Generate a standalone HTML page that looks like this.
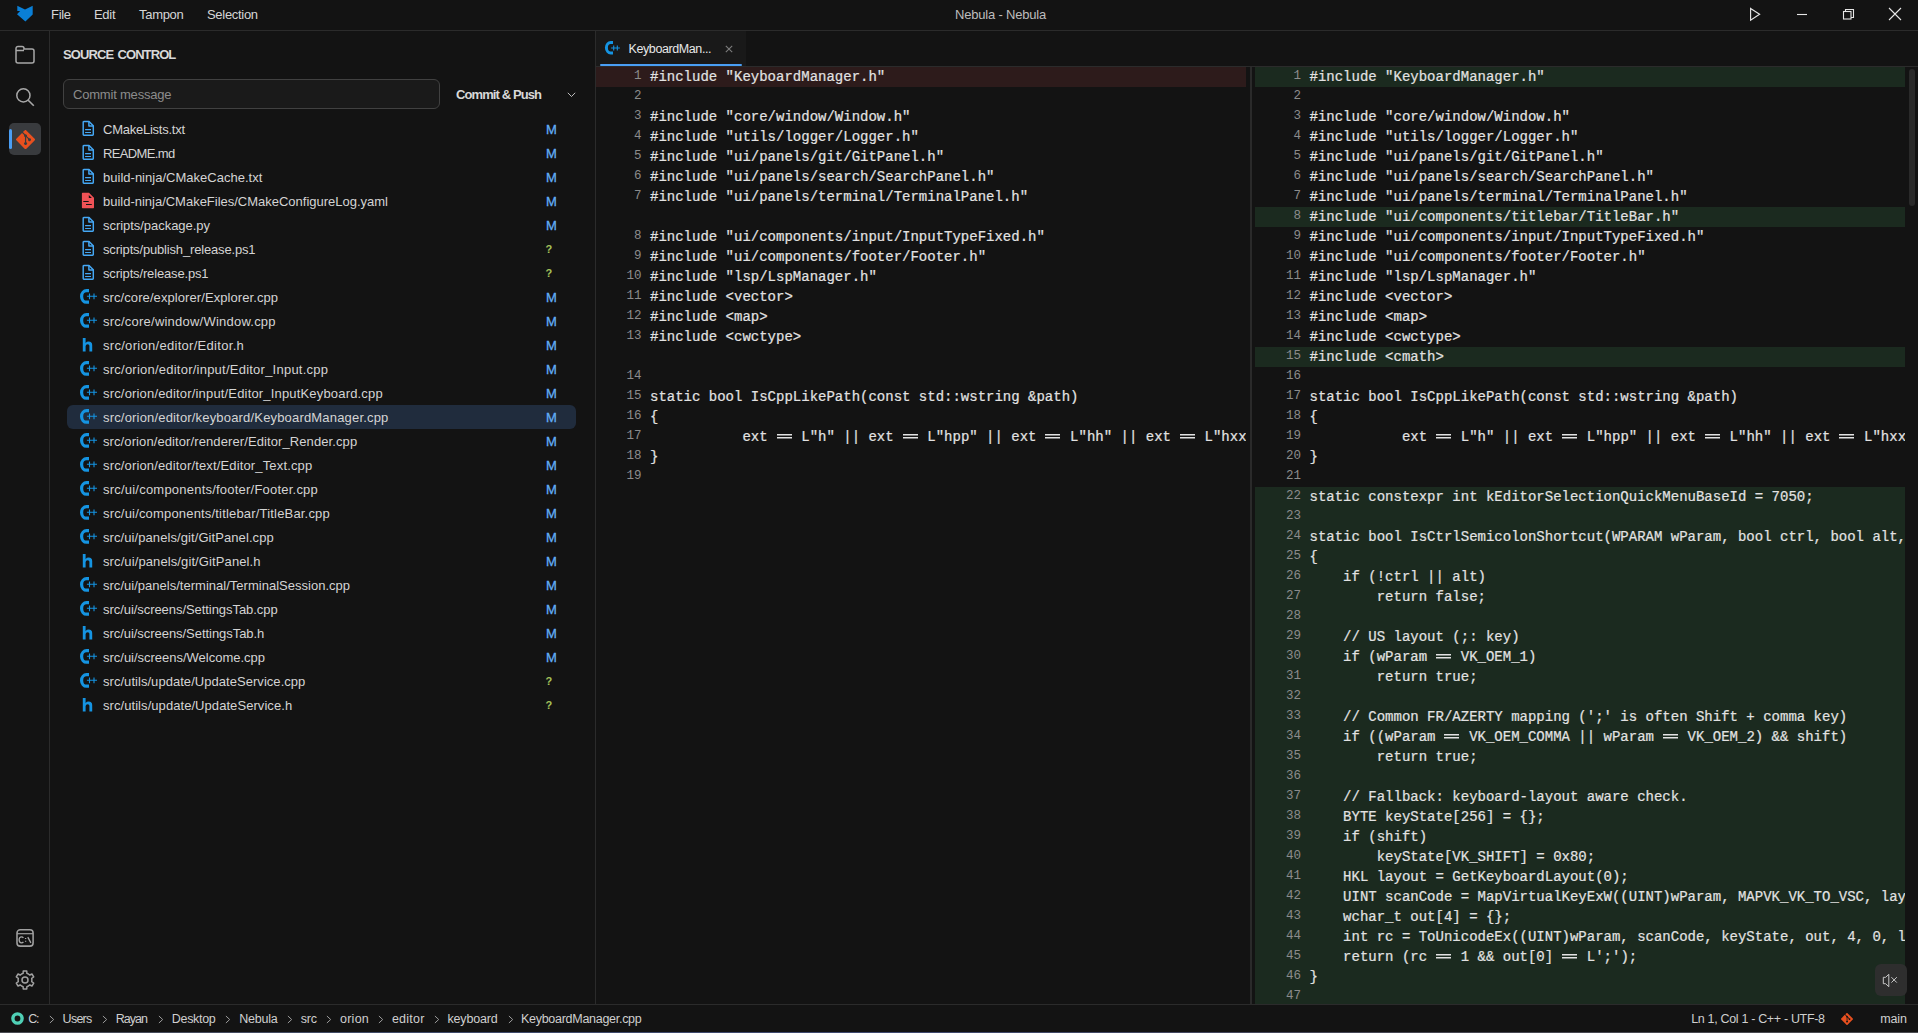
<!DOCTYPE html>
<html><head><meta charset="utf-8"><title>Nebula</title>
<style>
*{margin:0;padding:0;box-sizing:border-box}
html,body{width:1918px;height:1033px;overflow:hidden;background:#131313;font-family:"Liberation Sans",sans-serif;color:#d4d4d4}
.abs{position:absolute}
#titlebar{position:absolute;left:0;top:0;width:1918px;height:31px;background:#131313;border-bottom:1px solid #2b2b2b}
.menu{position:absolute;top:7px;font-size:13px;color:#d6d6d6;letter-spacing:-0.3px}
#title{position:absolute;top:7px;left:955px;font-size:13px;color:#bdbdbd;letter-spacing:-0.2px}
#activity{position:absolute;left:0;top:31px;width:50px;height:973px;border-right:1px solid #2b2b2b}
#sidebar{position:absolute;left:50px;top:31px;width:546px;height:973px;border-right:1px solid #2b2b2b}
#sc-title{position:absolute;left:13px;top:16px;font-size:13px;font-weight:bold;color:#d8d8d8;letter-spacing:-0.9px;word-spacing:1.5px}
#commit{position:absolute;left:13px;top:48px;width:377px;height:30px;border:1px solid #414141;border-radius:6px;background:#1a1a1a}
#commit span{position:absolute;left:9px;top:7px;font-size:13px;color:#8c8c8c;letter-spacing:-0.2px}
#cpush{position:absolute;left:406px;top:56px;font-size:13px;font-weight:bold;color:#d8d8d8;letter-spacing:-0.9px}
.row{position:absolute;left:17px;width:509px;height:24px}
.row.sel{background:#202c3d;border-radius:6px}
.icw{position:absolute;left:9px;top:0;width:24px;height:24px}
.ic{position:absolute;left:0;top:0}
.fn{position:absolute;left:36px;top:5px;font-size:13px;color:#d4d4d4;white-space:nowrap;letter-spacing:-0.05px}
.st{position:absolute;left:479px;top:4.5px;font-size:13px;color:#62aef5;-webkit-text-stroke:0.3px #62aef5}
.st.q{left:478.6px;top:6.3px;color:#a6c25a;font-size:11px;font-weight:bold;-webkit-text-stroke:0}
#tabs{position:absolute;left:596px;top:31px;width:1322px;height:36px;border-bottom:1px solid #2b2b2b}
#tab{position:absolute;left:0;top:0;width:150px;height:35px;background:#191919}
#tab .ul{position:absolute;left:4px;top:33px;width:142px;height:2px;background:#4a9ef5;border-radius:1px}
#tab .nm{position:absolute;left:32.5px;top:10.5px;font-size:12.5px;color:#e8e8e8;letter-spacing:-0.4px}
#tab .x{position:absolute;left:128px;top:9px;font-size:14px;color:#8a8a8a}
.pane{position:absolute;top:67px;height:937px;overflow:hidden;font-family:"Liberation Mono",monospace;font-size:14px}
.ln{position:absolute;left:0;width:100%;height:20px}
.ln.red{background:#2d1b1b}
.ln.grn{background:#1b2a1f}
.num{position:absolute;left:0;width:45.5px;text-align:right;top:1.5px;color:#8c8c8c;font-size:12.5px}
.tx{position:absolute;left:54px;top:2px;white-space:pre;color:#e2e2e2;-webkit-text-stroke:0.2px #e2e2e2}
.eq{color:transparent;-webkit-text-stroke:0;background:linear-gradient(#e2e2e2,#e2e2e2) 0.5px 5px/15.3px 1.5px no-repeat,linear-gradient(#e2e2e2,#e2e2e2) 0.5px 8.4px/15.3px 1.5px no-repeat}
#lpane{left:596px;width:650px}
#rpane{left:1255px;width:650px}
#rpane .num{width:46px}
#rpane .tx{left:54.5px}
#divider{position:absolute;left:1250px;top:67px;width:2px;height:937px;background:#2a2a2a}
#vscroll{position:absolute;left:1909px;top:69px;width:6px;height:137px;background:#2a2a2a;border-radius:3px}
#mute{position:absolute;left:1875px;top:964px;width:32px;height:32px;border-radius:6px;background:#2e2e2e}
#status{position:absolute;left:0;top:1004px;width:1918px;height:28px;border-top:1px solid #2b2b2b;background:#131313}
#status .cr{position:absolute;top:6.5px;font-size:12.5px;color:#cfcfcf;white-space:nowrap}
.sep{display:inline-block;color:#9a9a9a;margin:0 0}
#bottomline{position:absolute;left:0;top:1032px;width:1918px;height:1px;background:linear-gradient(90deg,#4a4c52 0%,#3e4a6a 22%,#3e4870 47%,#464652 73%,#4a4b50 100%)}
</style></head>
<body>
<div id="titlebar">
  <svg class="abs" style="left:0;top:0" width="40" height="30" viewBox="0 0 40 30"><path d="M17.3 5.8L25 9.6L32.7 5.8L32.7 14.6L25.4 21.6L17 14.3L20.1 11L17.3 10.9Z" fill="#0a7fd6"/></svg>
  <span class="menu" style="left:51px">File</span>
  <span class="menu" style="left:94px">Edit</span>
  <span class="menu" style="left:139px">Tampon</span>
  <span class="menu" style="left:207px">Selection</span>
  <span id="title">Nebula - Nebula</span>
  <svg class="abs" style="left:1748px;top:6px" width="16" height="17" viewBox="0 0 16 17"><path d="M2.6 2.4L11.6 8.3L2.6 14.2Z" fill="none" stroke="#e6e6e6" stroke-width="1.15" stroke-linejoin="miter"/></svg>
  <svg class="abs" style="left:1796px;top:13px" width="12" height="3" viewBox="0 0 12 3"><path d="M1 1.5h10" stroke="#e6e6e6" stroke-width="1.1"/></svg>
  <svg class="abs" style="left:1842px;top:8px" width="13" height="12" viewBox="0 0 13 12"><rect x="1.5" y="3.5" width="7.5" height="7.5" fill="none" stroke="#e6e6e6" stroke-width="1.1"/><path d="M3.5 3.5V1.5h8v8h-2.5" fill="none" stroke="#e6e6e6" stroke-width="1.1"/></svg>
  <svg class="abs" style="left:1888px;top:7px" width="14" height="14" viewBox="0 0 14 14"><path d="M1 1L13 13M13 1L1 13" stroke="#e6e6e6" stroke-width="1.1"/></svg>
</div>

<div id="activity">
  <svg class="abs" style="left:14px;top:14px" width="22" height="20" viewBox="0 0 22 20"><path d="M2 3.5a2 2 0 0 1 2-2h4a2 2 0 0 1 2 2v0.5h8a2 2 0 0 1 2 2v10a2 2 0 0 1-2 2H4a2 2 0 0 1-2-2z M2 5.5h8" fill="none" stroke="#a8a8a8" stroke-width="1.5"/></svg>
  <svg class="abs" style="left:15px;top:56px" width="21" height="21" viewBox="0 0 21 21"><circle cx="8.4" cy="8.4" r="6.6" fill="none" stroke="#a8a8a8" stroke-width="1.5"/><path d="M13.2 13.2L18.8 18.8" stroke="#a8a8a8" stroke-width="1.6"/></svg>
  <div class="abs" style="left:9px;top:92px;width:32px;height:32px;background:#393b3e;border-radius:5px"></div>
  <div class="abs" style="left:9px;top:98px;width:3px;height:20px;background:#4a9ef5;border-radius:1.5px"></div>
  <svg class="abs" style="left:15.5px;top:98.5px" width="19" height="19" viewBox="0 0 92 92"><path d="M90.156 41.965 50.036 1.848a5.918 5.918 0 0 0-8.372 0l-8.328 8.332 10.566 10.566a7.03 7.03 0 0 1 7.23 1.684 7.034 7.034 0 0 1 1.669 7.277l10.187 10.184a7.028 7.028 0 0 1 7.278 1.672 7.04 7.04 0 0 1 0 9.957 7.05 7.05 0 0 1-9.965 0 7.044 7.044 0 0 1-1.528-7.66l-9.5-9.497V59.36a7.04 7.04 0 0 1 1.86 11.29 7.04 7.04 0 0 1-9.957 0 7.04 7.04 0 0 1 0-9.958 7.06 7.06 0 0 1 2.304-1.539V33.926a7.049 7.049 0 0 1-3.82-9.234L29.242 14.272 1.73 41.777a5.925 5.925 0 0 0 0 8.371L41.852 90.27a5.925 5.925 0 0 0 8.37 0l39.934-39.934a5.925 5.925 0 0 0 0-8.371" fill="#e8501f"/></svg>
  <svg class="abs" style="left:15px;top:897px" width="20" height="20" viewBox="0 0 20 20"><rect x="2" y="1.8" width="16.1" height="16.3" rx="3.2" fill="none" stroke="#a0a0a0" stroke-width="1.55"/><path d="M2 5.7H18" stroke="#a0a0a0" stroke-width="1.2"/><path d="M8.4 9.8C7.9 9.1 7.2 8.8 6.5 8.8C5 8.8 4.1 10.1 4.1 11.8C4.1 13.5 5 14.8 6.5 14.8C7.2 14.8 7.9 14.5 8.4 13.8" fill="none" stroke="#a8a8a8" stroke-width="1.3"/><path d="M10.6 10V11M10.6 12.8V13.8" stroke="#a8a8a8" stroke-width="1.3"/><path d="M12.8 9.1L15.9 14.9" stroke="#a8a8a8" stroke-width="1.3"/></svg>
  <svg class="abs" style="left:13px;top:937px" width="24" height="24" viewBox="0 0 24 24"><path fill="none" stroke="#a0a0a0" stroke-width="1.5" stroke-linejoin="round" d="M8.55 6.02 L10.10 5.37 L10.24 2.97 L13.76 2.97 L13.90 5.37 L15.45 6.02 L16.79 7.04 L18.94 5.96 L20.70 9.00 L18.70 10.33 L18.90 12.00 L18.70 13.67 L20.70 15.00 L18.94 18.04 L16.79 16.96 L15.45 17.98 L13.90 18.63 L13.76 21.03 L10.24 21.03 L10.10 18.63 L8.55 17.98 L7.21 16.96 L5.06 18.04 L3.30 15.00 L5.30 13.67 L5.10 12.00 L5.30 10.33 L3.30 9.00 L5.06 5.96 L7.21 7.04Z"/><circle cx="12" cy="12" r="3" fill="none" stroke="#a0a0a0" stroke-width="1.5"/></svg>
</div>

<div id="sidebar">
  <div id="sc-title">SOURCE CONTROL</div>
  <div id="commit"><span>Commit message</span></div>
  <div id="cpush">Commit &amp; Push</div>
  <svg class="abs" style="left:517px;top:61px" width="9" height="5" viewBox="0 0 9 5"><path d="M0.8 0.8l3.7 3.7 3.7-3.7" fill="none" stroke="#cfcfcf" stroke-width="0.9"/></svg>
<div class="row" style="top:86px"><span class="icw"><svg class="ic" width="24" height="24" viewBox="0 0 24 24"><path d="M7.2 5.2a0.6 0.6 0 0 1 0.6-0.7H13L17.3 8.8V17.6a0.7 0.7 0 0 1-0.7 0.7H7.9a0.7 0.7 0 0 1-0.7-0.7Z" fill="none" stroke="#45a8f5" stroke-width="1.45" stroke-linejoin="round"/><path d="M12.9 4.6V8.9H17.2" fill="none" stroke="#45a8f5" stroke-width="1.45" stroke-linejoin="round"/><path d="M9.1 12.6H15M9.1 15.5H15" stroke="#45a8f5" stroke-width="1.2"/></svg></span><span class="fn" style="letter-spacing:-0.242px">CMakeLists.txt</span><span class="st">M</span></div>
<div class="row" style="top:110px"><span class="icw"><svg class="ic" width="24" height="24" viewBox="0 0 24 24"><path d="M7.2 5.2a0.6 0.6 0 0 1 0.6-0.7H13L17.3 8.8V17.6a0.7 0.7 0 0 1-0.7 0.7H7.9a0.7 0.7 0 0 1-0.7-0.7Z" fill="none" stroke="#45a8f5" stroke-width="1.45" stroke-linejoin="round"/><path d="M12.9 4.6V8.9H17.2" fill="none" stroke="#45a8f5" stroke-width="1.45" stroke-linejoin="round"/><path d="M9.1 12.6H15M9.1 15.5H15" stroke="#45a8f5" stroke-width="1.2"/></svg></span><span class="fn" style="letter-spacing:-0.637px">README.md</span><span class="st">M</span></div>
<div class="row" style="top:134px"><span class="icw"><svg class="ic" width="24" height="24" viewBox="0 0 24 24"><path d="M7.2 5.2a0.6 0.6 0 0 1 0.6-0.7H13L17.3 8.8V17.6a0.7 0.7 0 0 1-0.7 0.7H7.9a0.7 0.7 0 0 1-0.7-0.7Z" fill="none" stroke="#45a8f5" stroke-width="1.45" stroke-linejoin="round"/><path d="M12.9 4.6V8.9H17.2" fill="none" stroke="#45a8f5" stroke-width="1.45" stroke-linejoin="round"/><path d="M9.1 12.6H15M9.1 15.5H15" stroke="#45a8f5" stroke-width="1.2"/></svg></span><span class="fn" style="letter-spacing:0.014px">build-ninja/CMakeCache.txt</span><span class="st">M</span></div>
<div class="row" style="top:158px"><span class="icw"><svg class="ic" width="24" height="24" viewBox="0 0 24 24"><path d="M5.9 4.4a0.6 0.6 0 0 1 0.6-0.6H13L18 8.8V18.5a0.7 0.7 0 0 1-0.7 0.7H6.6a0.7 0.7 0 0 1-0.7-0.7Z" fill="#f05256"/><path d="M12.8 6V9.1H15.9Z" fill="#131313"/><path d="M7.3 12.5H12.7M10 15.5H15.8" stroke="#131313" stroke-width="1.1"/></svg></span><span class="fn" style="letter-spacing:-0.011px">build-ninja/CMakeFiles/CMakeConfigureLog.yaml</span><span class="st">M</span></div>
<div class="row" style="top:182px"><span class="icw"><svg class="ic" width="24" height="24" viewBox="0 0 24 24"><path d="M7.2 5.2a0.6 0.6 0 0 1 0.6-0.7H13L17.3 8.8V17.6a0.7 0.7 0 0 1-0.7 0.7H7.9a0.7 0.7 0 0 1-0.7-0.7Z" fill="none" stroke="#45a8f5" stroke-width="1.45" stroke-linejoin="round"/><path d="M12.9 4.6V8.9H17.2" fill="none" stroke="#45a8f5" stroke-width="1.45" stroke-linejoin="round"/><path d="M9.1 12.6H15M9.1 15.5H15" stroke="#45a8f5" stroke-width="1.2"/></svg></span><span class="fn" style="letter-spacing:-0.038px">scripts/package.py</span><span class="st">M</span></div>
<div class="row" style="top:206px"><span class="icw"><svg class="ic" width="24" height="24" viewBox="0 0 24 24"><path d="M7.2 5.2a0.6 0.6 0 0 1 0.6-0.7H13L17.3 8.8V17.6a0.7 0.7 0 0 1-0.7 0.7H7.9a0.7 0.7 0 0 1-0.7-0.7Z" fill="none" stroke="#45a8f5" stroke-width="1.45" stroke-linejoin="round"/><path d="M12.9 4.6V8.9H17.2" fill="none" stroke="#45a8f5" stroke-width="1.45" stroke-linejoin="round"/><path d="M9.1 12.6H15M9.1 15.5H15" stroke="#45a8f5" stroke-width="1.2"/></svg></span><span class="fn" style="letter-spacing:-0.162px">scripts/publish_release.ps1</span><span class="st q">?</span></div>
<div class="row" style="top:230px"><span class="icw"><svg class="ic" width="24" height="24" viewBox="0 0 24 24"><path d="M7.2 5.2a0.6 0.6 0 0 1 0.6-0.7H13L17.3 8.8V17.6a0.7 0.7 0 0 1-0.7 0.7H7.9a0.7 0.7 0 0 1-0.7-0.7Z" fill="none" stroke="#45a8f5" stroke-width="1.45" stroke-linejoin="round"/><path d="M12.9 4.6V8.9H17.2" fill="none" stroke="#45a8f5" stroke-width="1.45" stroke-linejoin="round"/><path d="M9.1 12.6H15M9.1 15.5H15" stroke="#45a8f5" stroke-width="1.2"/></svg></span><span class="fn" style="letter-spacing:-0.156px">scripts/release.ps1</span><span class="st q">?</span></div>
<div class="row" style="top:254px"><span class="icw"><svg class="ic" width="24" height="24" viewBox="0 0 24 24"><path d="M13 4H10.5A6.5 7.4 0 0 0 10.5 18.8H13V15.6H10.5A3.3 4.2 0 0 1 10.5 7.2H13Z" fill="#1594e2"/><path d="M10.9 11.3H21M13.5 8.5V14.2M18 8.5V14.2" stroke="#1594e2" stroke-width="1.1"/></svg></span><span class="fn" style="letter-spacing:0.081px">src/core/explorer/Explorer.cpp</span><span class="st">M</span></div>
<div class="row" style="top:278px"><span class="icw"><svg class="ic" width="24" height="24" viewBox="0 0 24 24"><path d="M13 4H10.5A6.5 7.4 0 0 0 10.5 18.8H13V15.6H10.5A3.3 4.2 0 0 1 10.5 7.2H13Z" fill="#1594e2"/><path d="M10.9 11.3H21M13.5 8.5V14.2M18 8.5V14.2" stroke="#1594e2" stroke-width="1.1"/></svg></span><span class="fn" style="letter-spacing:0.226px">src/core/window/Window.cpp</span><span class="st">M</span></div>
<div class="row" style="top:302px"><span class="icw"><svg class="ic" width="24" height="24" viewBox="0 0 24 24"><path d="M6.8 4.9H9.6V9.9Q10.8 8.6 12.6 8.6Q16.2 8.6 16.2 12.2V18.4H13.4V12.8Q13.4 11.2 11.8 11.2Q9.6 11.2 9.6 13.2V18.4H6.8Z" fill="#1594e2"/></svg></span><span class="fn" style="letter-spacing:0.296px">src/orion/editor/Editor.h</span><span class="st">M</span></div>
<div class="row" style="top:326px"><span class="icw"><svg class="ic" width="24" height="24" viewBox="0 0 24 24"><path d="M13 4H10.5A6.5 7.4 0 0 0 10.5 18.8H13V15.6H10.5A3.3 4.2 0 0 1 10.5 7.2H13Z" fill="#1594e2"/><path d="M10.9 11.3H21M13.5 8.5V14.2M18 8.5V14.2" stroke="#1594e2" stroke-width="1.1"/></svg></span><span class="fn" style="letter-spacing:0.234px">src/orion/editor/input/Editor_Input.cpp</span><span class="st">M</span></div>
<div class="row" style="top:350px"><span class="icw"><svg class="ic" width="24" height="24" viewBox="0 0 24 24"><path d="M13 4H10.5A6.5 7.4 0 0 0 10.5 18.8H13V15.6H10.5A3.3 4.2 0 0 1 10.5 7.2H13Z" fill="#1594e2"/><path d="M10.9 11.3H21M13.5 8.5V14.2M18 8.5V14.2" stroke="#1594e2" stroke-width="1.1"/></svg></span><span class="fn" style="letter-spacing:0.172px">src/orion/editor/input/Editor_InputKeyboard.cpp</span><span class="st">M</span></div>
<div class="row sel" style="top:374px"><span class="icw"><svg class="ic" width="24" height="24" viewBox="0 0 24 24"><path d="M13 4H10.5A6.5 7.4 0 0 0 10.5 18.8H13V15.6H10.5A3.3 4.2 0 0 1 10.5 7.2H13Z" fill="#1594e2"/><path d="M10.9 11.3H21M13.5 8.5V14.2M18 8.5V14.2" stroke="#1594e2" stroke-width="1.1"/></svg></span><span class="fn" style="letter-spacing:0.177px">src/orion/editor/keyboard/KeyboardManager.cpp</span><span class="st">M</span></div>
<div class="row" style="top:398px"><span class="icw"><svg class="ic" width="24" height="24" viewBox="0 0 24 24"><path d="M13 4H10.5A6.5 7.4 0 0 0 10.5 18.8H13V15.6H10.5A3.3 4.2 0 0 1 10.5 7.2H13Z" fill="#1594e2"/><path d="M10.9 11.3H21M13.5 8.5V14.2M18 8.5V14.2" stroke="#1594e2" stroke-width="1.1"/></svg></span><span class="fn" style="letter-spacing:0.098px">src/orion/editor/renderer/Editor_Render.cpp</span><span class="st">M</span></div>
<div class="row" style="top:422px"><span class="icw"><svg class="ic" width="24" height="24" viewBox="0 0 24 24"><path d="M13 4H10.5A6.5 7.4 0 0 0 10.5 18.8H13V15.6H10.5A3.3 4.2 0 0 1 10.5 7.2H13Z" fill="#1594e2"/><path d="M10.9 11.3H21M13.5 8.5V14.2M18 8.5V14.2" stroke="#1594e2" stroke-width="1.1"/></svg></span><span class="fn" style="letter-spacing:0.150px">src/orion/editor/text/Editor_Text.cpp</span><span class="st">M</span></div>
<div class="row" style="top:446px"><span class="icw"><svg class="ic" width="24" height="24" viewBox="0 0 24 24"><path d="M13 4H10.5A6.5 7.4 0 0 0 10.5 18.8H13V15.6H10.5A3.3 4.2 0 0 1 10.5 7.2H13Z" fill="#1594e2"/><path d="M10.9 11.3H21M13.5 8.5V14.2M18 8.5V14.2" stroke="#1594e2" stroke-width="1.1"/></svg></span><span class="fn" style="letter-spacing:0.218px">src/ui/components/footer/Footer.cpp</span><span class="st">M</span></div>
<div class="row" style="top:470px"><span class="icw"><svg class="ic" width="24" height="24" viewBox="0 0 24 24"><path d="M13 4H10.5A6.5 7.4 0 0 0 10.5 18.8H13V15.6H10.5A3.3 4.2 0 0 1 10.5 7.2H13Z" fill="#1594e2"/><path d="M10.9 11.3H21M13.5 8.5V14.2M18 8.5V14.2" stroke="#1594e2" stroke-width="1.1"/></svg></span><span class="fn" style="letter-spacing:0.179px">src/ui/components/titlebar/TitleBar.cpp</span><span class="st">M</span></div>
<div class="row" style="top:494px"><span class="icw"><svg class="ic" width="24" height="24" viewBox="0 0 24 24"><path d="M13 4H10.5A6.5 7.4 0 0 0 10.5 18.8H13V15.6H10.5A3.3 4.2 0 0 1 10.5 7.2H13Z" fill="#1594e2"/><path d="M10.9 11.3H21M13.5 8.5V14.2M18 8.5V14.2" stroke="#1594e2" stroke-width="1.1"/></svg></span><span class="fn" style="letter-spacing:0.081px">src/ui/panels/git/GitPanel.cpp</span><span class="st">M</span></div>
<div class="row" style="top:518px"><span class="icw"><svg class="ic" width="24" height="24" viewBox="0 0 24 24"><path d="M6.8 4.9H9.6V9.9Q10.8 8.6 12.6 8.6Q16.2 8.6 16.2 12.2V18.4H13.4V12.8Q13.4 11.2 11.8 11.2Q9.6 11.2 9.6 13.2V18.4H6.8Z" fill="#1594e2"/></svg></span><span class="fn" style="letter-spacing:0.106px">src/ui/panels/git/GitPanel.h</span><span class="st">M</span></div>
<div class="row" style="top:542px"><span class="icw"><svg class="ic" width="24" height="24" viewBox="0 0 24 24"><path d="M13 4H10.5A6.5 7.4 0 0 0 10.5 18.8H13V15.6H10.5A3.3 4.2 0 0 1 10.5 7.2H13Z" fill="#1594e2"/><path d="M10.9 11.3H21M13.5 8.5V14.2M18 8.5V14.2" stroke="#1594e2" stroke-width="1.1"/></svg></span><span class="fn" style="letter-spacing:0.016px">src/ui/panels/terminal/TerminalSession.cpp</span><span class="st">M</span></div>
<div class="row" style="top:566px"><span class="icw"><svg class="ic" width="24" height="24" viewBox="0 0 24 24"><path d="M13 4H10.5A6.5 7.4 0 0 0 10.5 18.8H13V15.6H10.5A3.3 4.2 0 0 1 10.5 7.2H13Z" fill="#1594e2"/><path d="M10.9 11.3H21M13.5 8.5V14.2M18 8.5V14.2" stroke="#1594e2" stroke-width="1.1"/></svg></span><span class="fn" style="letter-spacing:-0.057px">src/ui/screens/SettingsTab.cpp</span><span class="st">M</span></div>
<div class="row" style="top:590px"><span class="icw"><svg class="ic" width="24" height="24" viewBox="0 0 24 24"><path d="M6.8 4.9H9.6V9.9Q10.8 8.6 12.6 8.6Q16.2 8.6 16.2 12.2V18.4H13.4V12.8Q13.4 11.2 11.8 11.2Q9.6 11.2 9.6 13.2V18.4H6.8Z" fill="#1594e2"/></svg></span><span class="fn" style="letter-spacing:-0.046px">src/ui/screens/SettingsTab.h</span><span class="st">M</span></div>
<div class="row" style="top:614px"><span class="icw"><svg class="ic" width="24" height="24" viewBox="0 0 24 24"><path d="M13 4H10.5A6.5 7.4 0 0 0 10.5 18.8H13V15.6H10.5A3.3 4.2 0 0 1 10.5 7.2H13Z" fill="#1594e2"/><path d="M10.9 11.3H21M13.5 8.5V14.2M18 8.5V14.2" stroke="#1594e2" stroke-width="1.1"/></svg></span><span class="fn" style="letter-spacing:-0.014px">src/ui/screens/Welcome.cpp</span><span class="st">M</span></div>
<div class="row" style="top:638px"><span class="icw"><svg class="ic" width="24" height="24" viewBox="0 0 24 24"><path d="M13 4H10.5A6.5 7.4 0 0 0 10.5 18.8H13V15.6H10.5A3.3 4.2 0 0 1 10.5 7.2H13Z" fill="#1594e2"/><path d="M10.9 11.3H21M13.5 8.5V14.2M18 8.5V14.2" stroke="#1594e2" stroke-width="1.1"/></svg></span><span class="fn" style="letter-spacing:0.044px">src/utils/update/UpdateService.cpp</span><span class="st q">?</span></div>
<div class="row" style="top:662px"><span class="icw"><svg class="ic" width="24" height="24" viewBox="0 0 24 24"><path d="M6.8 4.9H9.6V9.9Q10.8 8.6 12.6 8.6Q16.2 8.6 16.2 12.2V18.4H13.4V12.8Q13.4 11.2 11.8 11.2Q9.6 11.2 9.6 13.2V18.4H6.8Z" fill="#1594e2"/></svg></span><span class="fn" style="letter-spacing:0.063px">src/utils/update/UpdateService.h</span><span class="st q">?</span></div>
</div>

<div id="tabs">
  <div id="tab">
    <svg class="abs" style="left:5px;top:5px" width="24" height="24" viewBox="0 0 24 24"><path d="M12 5.1H9.7A5.8 6.75 0 0 0 9.7 18.6H12V15.6H9.7A2.8 3.75 0 0 1 9.7 8.1H12Z" fill="#1594e2"/><path d="M10.1 12H18.9M12.7 9.5V14.6M16.3 9.5V14.6" stroke="#1594e2" stroke-width="1.1"/></svg>
    <span class="nm">KeyboardMan...</span>
    <svg class="abs" style="left:129px;top:13.5px" width="8" height="8" viewBox="0 0 8 8"><path d="M0.8 0.8L7.2 7.2M7.2 0.8L0.8 7.2" stroke="#7c7c7c" stroke-width="1.1"/></svg>
    <div class="ul"></div>
  </div>
</div>

<div id="lpane" class="pane">
<div class="ln red" style="top:0px"><span class="num">1</span><span class="tx">#include &quot;KeyboardManager.h&quot;</span></div>
<div class="ln" style="top:20px"><span class="num">2</span><span class="tx"></span></div>
<div class="ln" style="top:40px"><span class="num">3</span><span class="tx">#include &quot;core/window/Window.h&quot;</span></div>
<div class="ln" style="top:60px"><span class="num">4</span><span class="tx">#include &quot;utils/logger/Logger.h&quot;</span></div>
<div class="ln" style="top:80px"><span class="num">5</span><span class="tx">#include &quot;ui/panels/git/GitPanel.h&quot;</span></div>
<div class="ln" style="top:100px"><span class="num">6</span><span class="tx">#include &quot;ui/panels/search/SearchPanel.h&quot;</span></div>
<div class="ln" style="top:120px"><span class="num">7</span><span class="tx">#include &quot;ui/panels/terminal/TerminalPanel.h&quot;</span></div>
<div class="ln" style="top:140px"><span class="num"></span><span class="tx"></span></div>
<div class="ln" style="top:160px"><span class="num">8</span><span class="tx">#include &quot;ui/components/input/InputTypeFixed.h&quot;</span></div>
<div class="ln" style="top:180px"><span class="num">9</span><span class="tx">#include &quot;ui/components/footer/Footer.h&quot;</span></div>
<div class="ln" style="top:200px"><span class="num">10</span><span class="tx">#include &quot;lsp/LspManager.h&quot;</span></div>
<div class="ln" style="top:220px"><span class="num">11</span><span class="tx">#include &lt;vector&gt;</span></div>
<div class="ln" style="top:240px"><span class="num">12</span><span class="tx">#include &lt;map&gt;</span></div>
<div class="ln" style="top:260px"><span class="num">13</span><span class="tx">#include &lt;cwctype&gt;</span></div>
<div class="ln" style="top:280px"><span class="num"></span><span class="tx"></span></div>
<div class="ln" style="top:300px"><span class="num">14</span><span class="tx"></span></div>
<div class="ln" style="top:320px"><span class="num">15</span><span class="tx">static bool IsCppLikePath(const std::wstring &amp;path)</span></div>
<div class="ln" style="top:340px"><span class="num">16</span><span class="tx">{</span></div>
<div class="ln" style="top:360px"><span class="num">17</span><span class="tx">           ext <span class="eq">==</span> L&quot;h&quot; || ext <span class="eq">==</span> L&quot;hpp&quot; || ext <span class="eq">==</span> L&quot;hh&quot; || ext <span class="eq">==</span> L&quot;hxx&quot; || ext <span class="eq">==</span> L&quot;inl&quot;;</span></div>
<div class="ln" style="top:380px"><span class="num">18</span><span class="tx">}</span></div>
<div class="ln" style="top:400px"><span class="num">19</span><span class="tx"></span></div>
</div>
<div id="divider"></div>
<div id="rpane" class="pane">
<div class="ln grn" style="top:0px"><span class="num">1</span><span class="tx">#include &quot;KeyboardManager.h&quot;</span></div>
<div class="ln" style="top:20px"><span class="num">2</span><span class="tx"></span></div>
<div class="ln" style="top:40px"><span class="num">3</span><span class="tx">#include &quot;core/window/Window.h&quot;</span></div>
<div class="ln" style="top:60px"><span class="num">4</span><span class="tx">#include &quot;utils/logger/Logger.h&quot;</span></div>
<div class="ln" style="top:80px"><span class="num">5</span><span class="tx">#include &quot;ui/panels/git/GitPanel.h&quot;</span></div>
<div class="ln" style="top:100px"><span class="num">6</span><span class="tx">#include &quot;ui/panels/search/SearchPanel.h&quot;</span></div>
<div class="ln" style="top:120px"><span class="num">7</span><span class="tx">#include &quot;ui/panels/terminal/TerminalPanel.h&quot;</span></div>
<div class="ln grn" style="top:140px"><span class="num">8</span><span class="tx">#include &quot;ui/components/titlebar/TitleBar.h&quot;</span></div>
<div class="ln" style="top:160px"><span class="num">9</span><span class="tx">#include &quot;ui/components/input/InputTypeFixed.h&quot;</span></div>
<div class="ln" style="top:180px"><span class="num">10</span><span class="tx">#include &quot;ui/components/footer/Footer.h&quot;</span></div>
<div class="ln" style="top:200px"><span class="num">11</span><span class="tx">#include &quot;lsp/LspManager.h&quot;</span></div>
<div class="ln" style="top:220px"><span class="num">12</span><span class="tx">#include &lt;vector&gt;</span></div>
<div class="ln" style="top:240px"><span class="num">13</span><span class="tx">#include &lt;map&gt;</span></div>
<div class="ln" style="top:260px"><span class="num">14</span><span class="tx">#include &lt;cwctype&gt;</span></div>
<div class="ln grn" style="top:280px"><span class="num">15</span><span class="tx">#include &lt;cmath&gt;</span></div>
<div class="ln" style="top:300px"><span class="num">16</span><span class="tx"></span></div>
<div class="ln" style="top:320px"><span class="num">17</span><span class="tx">static bool IsCppLikePath(const std::wstring &amp;path)</span></div>
<div class="ln" style="top:340px"><span class="num">18</span><span class="tx">{</span></div>
<div class="ln" style="top:360px"><span class="num">19</span><span class="tx">           ext <span class="eq">==</span> L&quot;h&quot; || ext <span class="eq">==</span> L&quot;hpp&quot; || ext <span class="eq">==</span> L&quot;hh&quot; || ext <span class="eq">==</span> L&quot;hxx&quot; || ext <span class="eq">==</span> L&quot;inl&quot;;</span></div>
<div class="ln" style="top:380px"><span class="num">20</span><span class="tx">}</span></div>
<div class="ln" style="top:400px"><span class="num">21</span><span class="tx"></span></div>
<div class="ln grn" style="top:420px"><span class="num">22</span><span class="tx">static constexpr int kEditorSelectionQuickMenuBaseId = 7050;</span></div>
<div class="ln grn" style="top:440px"><span class="num">23</span><span class="tx"></span></div>
<div class="ln grn" style="top:460px"><span class="num">24</span><span class="tx">static bool IsCtrlSemicolonShortcut(WPARAM wParam, bool ctrl, bool alt, bool shift)</span></div>
<div class="ln grn" style="top:480px"><span class="num">25</span><span class="tx">{</span></div>
<div class="ln grn" style="top:500px"><span class="num">26</span><span class="tx">    if (!ctrl || alt)</span></div>
<div class="ln grn" style="top:520px"><span class="num">27</span><span class="tx">        return false;</span></div>
<div class="ln grn" style="top:540px"><span class="num">28</span><span class="tx"></span></div>
<div class="ln grn" style="top:560px"><span class="num">29</span><span class="tx">    // US layout (;: key)</span></div>
<div class="ln grn" style="top:580px"><span class="num">30</span><span class="tx">    if (wParam <span class="eq">==</span> VK_OEM_1)</span></div>
<div class="ln grn" style="top:600px"><span class="num">31</span><span class="tx">        return true;</span></div>
<div class="ln grn" style="top:620px"><span class="num">32</span><span class="tx"></span></div>
<div class="ln grn" style="top:640px"><span class="num">33</span><span class="tx">    // Common FR/AZERTY mapping (&#x27;;&#x27; is often Shift + comma key)</span></div>
<div class="ln grn" style="top:660px"><span class="num">34</span><span class="tx">    if ((wParam <span class="eq">==</span> VK_OEM_COMMA || wParam <span class="eq">==</span> VK_OEM_2) &amp;&amp; shift)</span></div>
<div class="ln grn" style="top:680px"><span class="num">35</span><span class="tx">        return true;</span></div>
<div class="ln grn" style="top:700px"><span class="num">36</span><span class="tx"></span></div>
<div class="ln grn" style="top:720px"><span class="num">37</span><span class="tx">    // Fallback: keyboard-layout aware check.</span></div>
<div class="ln grn" style="top:740px"><span class="num">38</span><span class="tx">    BYTE keyState[256] = {};</span></div>
<div class="ln grn" style="top:760px"><span class="num">39</span><span class="tx">    if (shift)</span></div>
<div class="ln grn" style="top:780px"><span class="num">40</span><span class="tx">        keyState[VK_SHIFT] = 0x80;</span></div>
<div class="ln grn" style="top:800px"><span class="num">41</span><span class="tx">    HKL layout = GetKeyboardLayout(0);</span></div>
<div class="ln grn" style="top:820px"><span class="num">42</span><span class="tx">    UINT scanCode = MapVirtualKeyExW((UINT)wParam, MAPVK_VK_TO_VSC, layout);</span></div>
<div class="ln grn" style="top:840px"><span class="num">43</span><span class="tx">    wchar_t out[4] = {};</span></div>
<div class="ln grn" style="top:860px"><span class="num">44</span><span class="tx">    int rc = ToUnicodeEx((UINT)wParam, scanCode, keyState, out, 4, 0, layout);</span></div>
<div class="ln grn" style="top:880px"><span class="num">45</span><span class="tx">    return (rc <span class="eq">==</span> 1 &amp;&amp; out[0] <span class="eq">==</span> L&#x27;;&#x27;);</span></div>
<div class="ln grn" style="top:900px"><span class="num">46</span><span class="tx">}</span></div>
<div class="ln grn" style="top:920px"><span class="num">47</span><span class="tx"></span></div>
</div>
<div id="vscroll"></div>
<div id="mute">
  <svg class="abs" style="left:7px;top:9px" width="18" height="15" viewBox="0 0 18 15"><path d="M1.3 4.3H3.6L6.8 1.3V13.7L3.6 10.7H1.3Z" fill="none" stroke="#c8c8c8" stroke-width="1" stroke-linejoin="round"/><path d="M9.4 4.2L14.8 9.6M14.8 4.2L9.4 9.6" stroke="#c8c8c8" stroke-width="1"/></svg>
</div>

<div id="status">
  <svg class="abs" style="left:11px;top:7px" width="13" height="13" viewBox="0 0 13 13"><circle cx="6.5" cy="6.5" r="4.6" fill="none" stroke="#4fcfb5" stroke-width="3.4"/></svg>
  <span class="cr" style="left:28.2px;letter-spacing:-1.20px">C:</span>
  <span class="cr" style="left:62.6px;letter-spacing:-0.74px">Users</span>
  <span class="cr" style="left:115.8px;letter-spacing:-0.99px">Rayan</span>
  <span class="cr" style="left:171.8px;letter-spacing:-0.31px">Desktop</span>
  <span class="cr" style="left:239.3px;letter-spacing:-0.22px">Nebula</span>
  <span class="cr" style="left:300.8px;letter-spacing:-0.24px">src</span>
  <span class="cr" style="left:340.0px;letter-spacing:0.25px">orion</span>
  <span class="cr" style="left:391.9px;letter-spacing:0.24px">editor</span>
  <span class="cr" style="left:447.5px;letter-spacing:-0.19px">keyboard</span>
  <span class="cr" style="left:521.0px;letter-spacing:-0.28px">KeyboardManager.cpp</span>
  <svg class="abs" style="left:48.9px;top:10px" width="6" height="9" viewBox="0 0 6 9"><path d="M0.9 1l3.8 3.5-3.8 3.5" fill="none" stroke="#9c9c9c" stroke-width="1"/></svg>
  <svg class="abs" style="left:101.9px;top:10px" width="6" height="9" viewBox="0 0 6 9"><path d="M0.9 1l3.8 3.5-3.8 3.5" fill="none" stroke="#9c9c9c" stroke-width="1"/></svg>
  <svg class="abs" style="left:157.5px;top:10px" width="6" height="9" viewBox="0 0 6 9"><path d="M0.9 1l3.8 3.5-3.8 3.5" fill="none" stroke="#9c9c9c" stroke-width="1"/></svg>
  <svg class="abs" style="left:225.3px;top:10px" width="6" height="9" viewBox="0 0 6 9"><path d="M0.9 1l3.8 3.5-3.8 3.5" fill="none" stroke="#9c9c9c" stroke-width="1"/></svg>
  <svg class="abs" style="left:287.3px;top:10px" width="6" height="9" viewBox="0 0 6 9"><path d="M0.9 1l3.8 3.5-3.8 3.5" fill="none" stroke="#9c9c9c" stroke-width="1"/></svg>
  <svg class="abs" style="left:326.0px;top:10px" width="6" height="9" viewBox="0 0 6 9"><path d="M0.9 1l3.8 3.5-3.8 3.5" fill="none" stroke="#9c9c9c" stroke-width="1"/></svg>
  <svg class="abs" style="left:378.4px;top:10px" width="6" height="9" viewBox="0 0 6 9"><path d="M0.9 1l3.8 3.5-3.8 3.5" fill="none" stroke="#9c9c9c" stroke-width="1"/></svg>
  <svg class="abs" style="left:434.0px;top:10px" width="6" height="9" viewBox="0 0 6 9"><path d="M0.9 1l3.8 3.5-3.8 3.5" fill="none" stroke="#9c9c9c" stroke-width="1"/></svg>
  <svg class="abs" style="left:507.5px;top:10px" width="6" height="9" viewBox="0 0 6 9"><path d="M0.9 1l3.8 3.5-3.8 3.5" fill="none" stroke="#9c9c9c" stroke-width="1"/></svg>
  <span class="cr" style="left:1691.2px;letter-spacing:-0.33px">Ln 1, Col 1 - C++ - UTF-8</span>
  <svg class="abs" style="left:1841px;top:8px" width="12" height="12" viewBox="0 0 92 92"><path d="M90.156 41.965 50.036 1.848a5.918 5.918 0 0 0-8.372 0l-8.328 8.332 10.566 10.566a7.03 7.03 0 0 1 7.23 1.684 7.034 7.034 0 0 1 1.669 7.277l10.187 10.184a7.028 7.028 0 0 1 7.278 1.672 7.04 7.04 0 0 1 0 9.957 7.05 7.05 0 0 1-9.965 0 7.044 7.044 0 0 1-1.528-7.66l-9.5-9.497V59.36a7.04 7.04 0 0 1 1.86 11.29 7.04 7.04 0 0 1-9.957 0 7.04 7.04 0 0 1 0-9.958 7.06 7.06 0 0 1 2.304-1.539V33.926a7.049 7.049 0 0 1-3.82-9.234L29.242 14.272 1.73 41.777a5.925 5.925 0 0 0 0 8.371L41.852 90.27a5.925 5.925 0 0 0 8.37 0l39.934-39.934a5.925 5.925 0 0 0 0-8.371" fill="#e8501f"/></svg>
  <span class="cr" style="left:1880.3px;letter-spacing:-0.17px">main</span>
</div>
<div id="bottomline"></div>
</body></html>
